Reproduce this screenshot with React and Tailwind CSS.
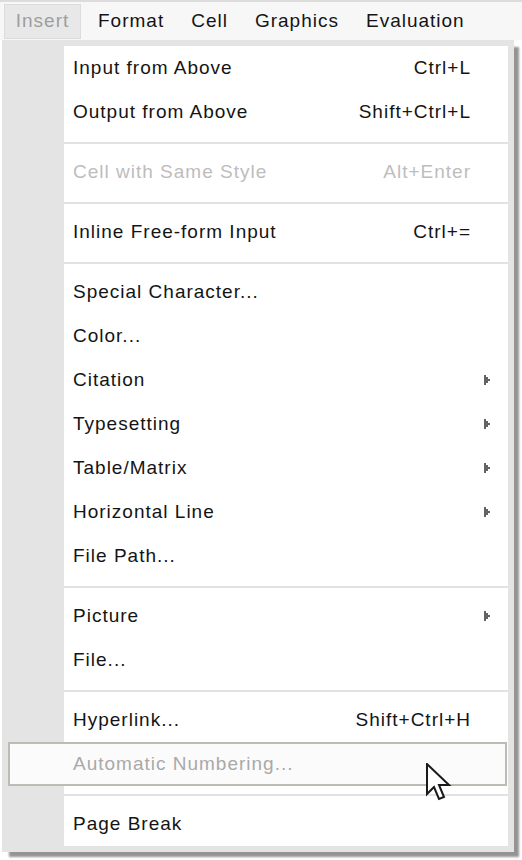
import React from "react";

const Arrow = () => (
  <svg width="6" height="10" viewBox="0 0 6 10" className="block">
    <polygon points="0,0 2,0 2,2 4,2 4,4 6,4 6,6 4,6 4,8 2,8 2,10 0,10" fill="#636363" />
  </svg>
);

const Cursor = () => (
  <svg width="26" height="40" viewBox="0 0 13 20" className="block">
    <path
      d="M0.5 0.5 L0.5 15.5 L4 12 L6.5 18 L9 17 L6.5 11 L11.5 11 Z"
      fill="#ffffff"
      stroke="#1a1a1a"
      strokeWidth="1"
      strokeLinejoin="miter"
    />
  </svg>
);

function Item({ label, shortcut, sub, disabled, hover }) {
  return (
    <div className="relative flex h-[44px] items-center pl-[9px]">
      {hover && (
        <div className="absolute left-[-56px] right-[1px] top-0 bottom-0 border-2 border-[#bcbcb4] bg-[#fbfbfb]" />
      )}
      <span
        className={`relative flex-1 whitespace-nowrap ${
          disabled ? (hover ? "text-[#a9a9a9]" : "text-[#bdbdbd]") : "text-[#141414]"
        }`}
      >
        {label}
      </span>
      {shortcut && (
        <span
          className={`relative whitespace-nowrap ${
            disabled ? "text-[#bdbdbd]" : "text-[#141414]"
          }`}
        >
          {shortcut}
        </span>
      )}
      <div className="relative flex w-[37px] items-center pl-[13px]">{sub && <Arrow />}</div>
      {hover && (
        <div className="absolute left-[362px] top-[21px]">
          <Cursor />
        </div>
      )}
    </div>
  );
}

const Sep = () => (
  <div className="pt-[8px] pb-[6px]">
    <div className="h-[2px] bg-[#e2e2e2]" />
  </div>
);

export default function App() {
  return (
    <div
      className="relative h-[860px] w-[522px] overflow-hidden bg-white text-[19px] tracking-[1px]"
      style={{ fontFamily: '"Liberation Sans", Arial, sans-serif' }}
    >
      <div className="h-[2px] bg-[#dcdcdc]" />
      <div className="flex h-[38px] bg-[#f7f7f7] text-[#141414]">
        <div className="ml-[4px] mt-[2px] flex h-[35px] w-[77px] items-center justify-center border border-[#dcdcdc] bg-[#e8e8e8] text-[#9e9e9e]">
          Insert
        </div>
        <div className="ml-[17px] flex items-center gap-[27px] pt-[1px]">
          <span>Format</span>
          <span>Cell</span>
          <span>Graphics</span>
          <span>Evaluation</span>
        </div>
      </div>
      <div className="ml-[2px] w-[512px] bg-[#e4e4e4] pt-[6px] pr-[6px] pb-[6px] pl-[62px] shadow-[6px_6px_2px_-1px_rgba(0,0,0,0.42)]">
        <div className="bg-white">
          <Item label="Input from Above" shortcut="Ctrl+L" />
          <Item label="Output from Above" shortcut="Shift+Ctrl+L" />
          <Sep />
          <Item label="Cell with Same Style" shortcut="Alt+Enter" disabled />
          <Sep />
          <Item label="Inline Free-form Input" shortcut="Ctrl+=" />
          <Sep />
          <Item label="Special Character..." />
          <Item label="Color..." />
          <Item label="Citation" sub />
          <Item label="Typesetting" sub />
          <Item label="Table/Matrix" sub />
          <Item label="Horizontal Line" sub />
          <Item label="File Path..." />
          <Sep />
          <Item label="Picture" sub />
          <Item label="File..." />
          <Sep />
          <Item label="Hyperlink..." shortcut="Shift+Ctrl+H" />
          <Item label="Automatic Numbering..." disabled hover />
          <Sep />
          <Item label="Page Break" />
        </div>
      </div>
    </div>
  );
}
